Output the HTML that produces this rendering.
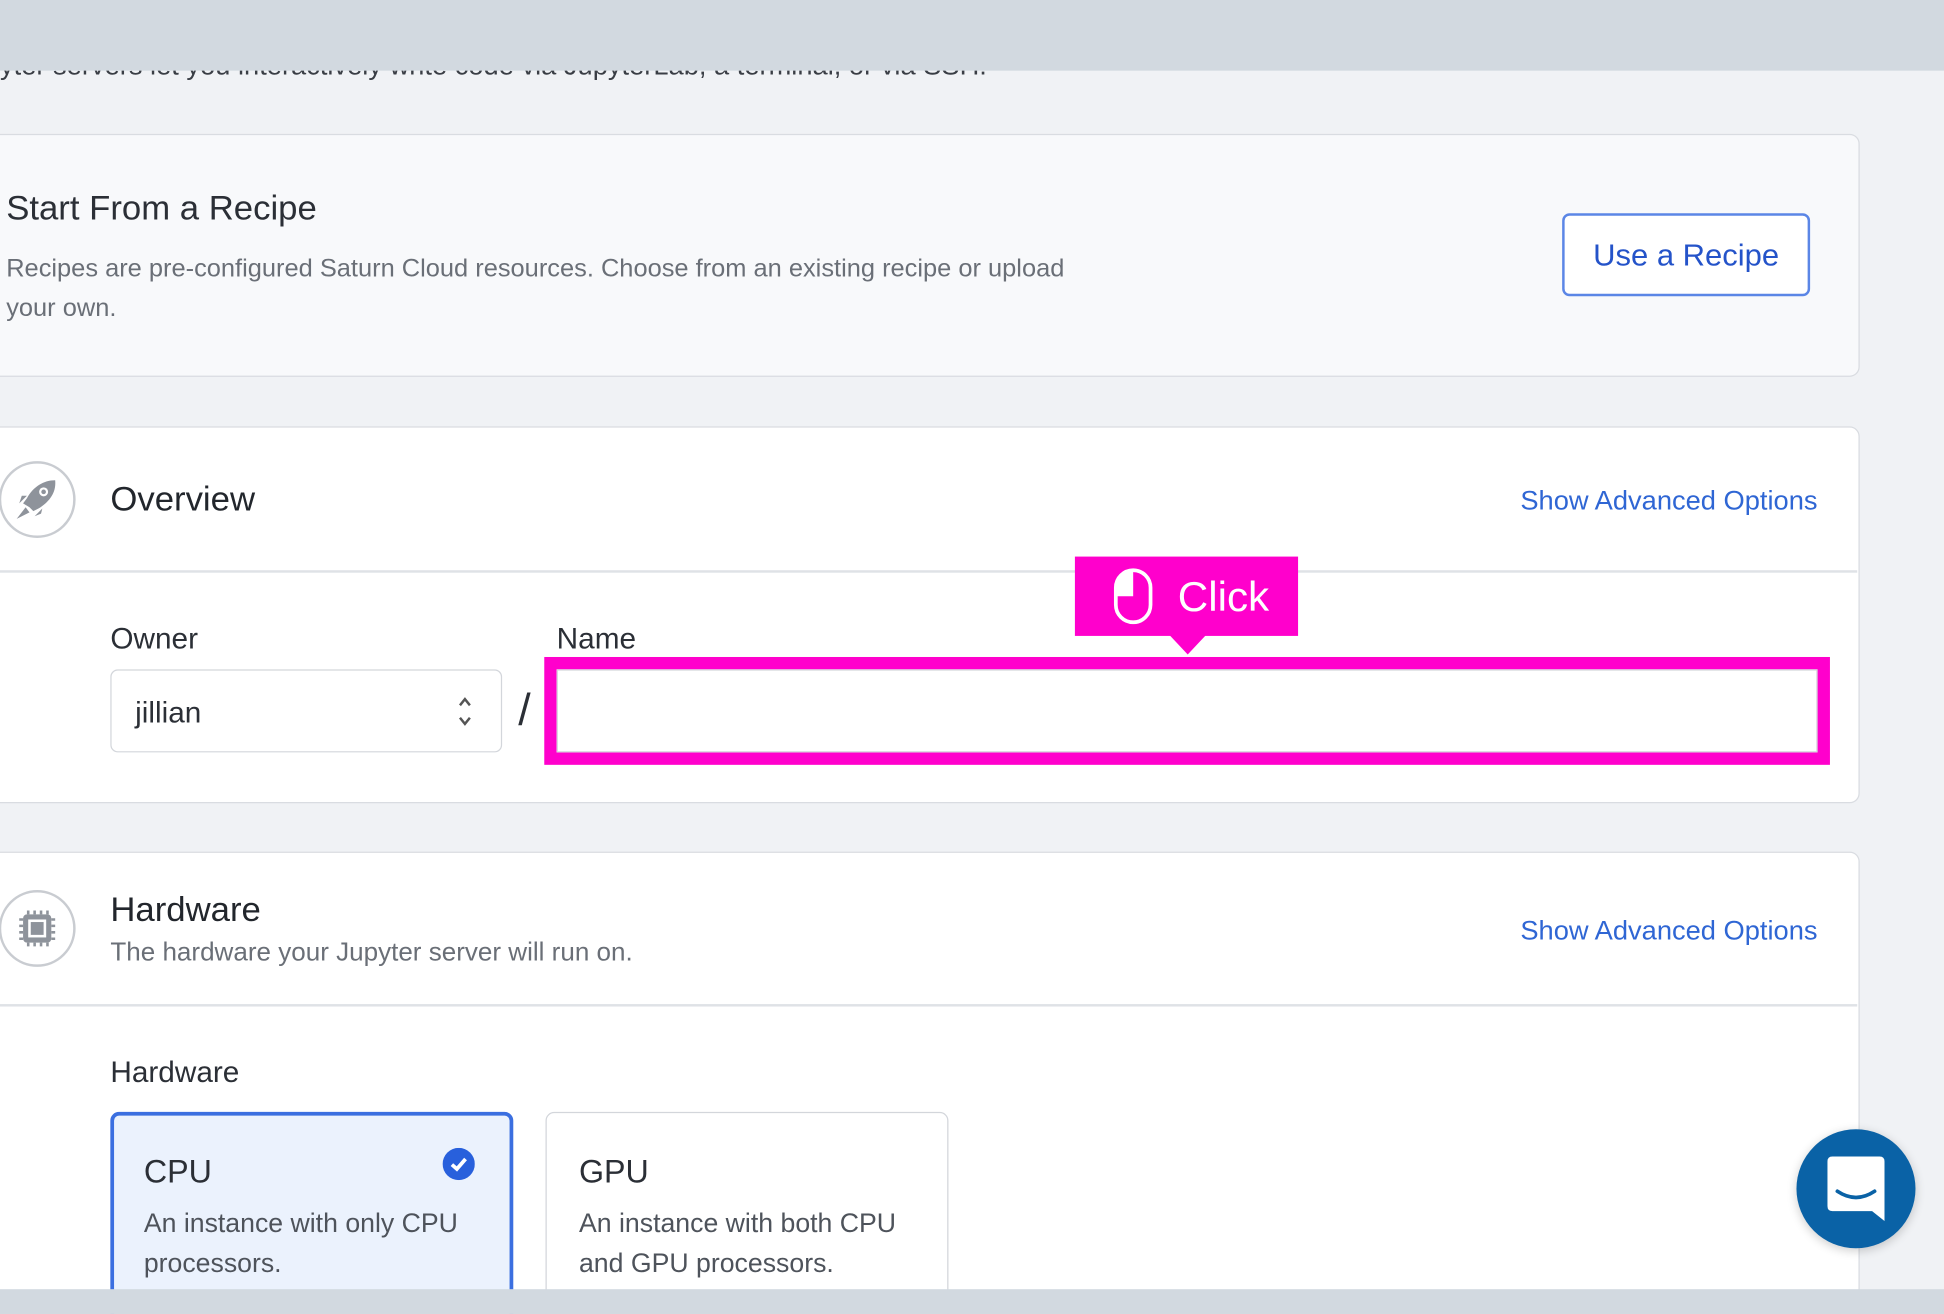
<!DOCTYPE html>
<html><head><meta charset="utf-8"><style>
html,body{margin:0;padding:0;width:1944px;height:1314px;overflow:hidden;background:#f0f2f5;}
#w{position:absolute;left:0;top:0;width:1568px;height:1060px;overflow:hidden;transform:scale(1.2398,1.2396);transform-origin:0 0;font-family:"Liberation Sans",sans-serif;color:#2b2f36;}
.a{position:absolute;}
.card{position:absolute;left:-10px;width:1510px;border:1.5px solid #d9dce1;border-radius:8px;background:#fff;box-sizing:border-box;}
.blue{color:#2f66d4;}
.ic{position:absolute;left:-1px;width:62px;height:62px;border:2.5px solid #c9ccd1;border-radius:50%;box-sizing:border-box;background:#fff;}
</style></head><body><div id="w">
<div class="a" style="left:0;top:43px;font-size:22px;color:#3a3e45;line-height:20px;">yter servers let you interactively write code via JupyterLab, a terminal, or via SSH.</div>
<div class="a" style="left:0;top:0;width:1568px;height:57px;background:#d2d9e0;"></div>

<div class="card" style="top:108px;height:196px;background:#f8f9fb;"></div>
<div class="a" style="left:5px;top:152px;font-size:28px;color:#2b2f36;">Start From a Recipe</div>
<div class="a" style="left:5px;top:201px;font-size:20.5px;line-height:32px;color:#6a6f77;width:880px;">Recipes are pre-configured Saturn Cloud resources. Choose from an existing recipe or upload your own.</div>
<div class="a" style="left:1260px;top:172px;width:200px;height:67px;border:2px solid #5b86e6;border-radius:6px;box-sizing:border-box;background:#fff;font-size:25px;line-height:65px;text-align:center;color:#2453c9;">Use a Recipe</div>

<div class="card" style="top:344px;height:304px;"></div>
<div class="a" style="left:0;top:460px;width:1498px;height:2px;background:#dfe2e6;"></div>
<div class="ic" style="top:372px;"><svg width="58" height="58" viewBox="0 0 56 56" style="position:absolute;left:0;top:0"><path d="M42 13 C33 13 25 18 20 27 L17 31 L22 34 L25 37 L29 35 C37 30 43 23 42 13 Z" fill="#8e939b"/><circle cx="33" cy="22" r="3.5" fill="#fff"/><circle cx="33" cy="22" r="1.8" fill="#8e939b"/><path d="M19 34 L12 43 L22 38 Z" fill="#8e939b"/><path d="M14 31 L20 25 L16 25 Z M26 41 L32 35 L31 39Z" fill="#8e939b"/></svg></div>
<div class="a" style="left:89px;top:387px;font-size:28px;color:#22262c;">Overview</div>
<div class="a blue" style="right:102px;top:391px;font-size:22px;">Show Advanced Options</div>
<div class="a" style="left:89px;top:502px;font-size:24px;color:#2b2f36;">Owner</div>
<div class="a" style="left:449px;top:502px;font-size:24px;color:#2b2f36;">Name</div>
<div class="a" style="left:89px;top:540px;width:316px;height:67px;border:1.5px solid #d3d6db;border-radius:6px;box-sizing:border-box;background:#fff;"></div>
<div class="a" style="left:109px;top:562px;font-size:24px;color:#2b2f36;">jillian</div>
<svg class="a" style="left:367px;top:560px" width="16" height="28" viewBox="0 0 16 28"><path d="M4 9 L8 4 L12 9 M4 19 L8 24 L12 19" fill="none" stroke="#555" stroke-width="2"/></svg>
<div class="a" style="left:418px;top:552px;font-size:36px;color:#2b2f36;">/</div>
<div class="a" style="left:439px;top:530px;width:1037px;height:87px;border:10px solid #ff00cc;box-sizing:border-box;"></div>
<div class="a" style="left:449px;top:540px;width:1017px;height:67px;border:1.5px solid #d3d6db;box-sizing:border-box;background:#fff;"></div>
<div class="a" style="left:867px;top:449px;width:180px;height:64px;background:#ff00cc;"></div>
<div class="a" style="left:943px;top:512px;width:0;height:0;border-left:15px solid transparent;border-right:15px solid transparent;border-top:16px solid #ff00cc;"></div>
<svg class="a" style="left:897px;top:457px" width="34" height="48" viewBox="0 0 34 48"><rect x="3" y="3" width="28" height="42" rx="14" fill="none" stroke="#fff" stroke-width="3"/><path d="M3 24 H17 V3 A14 14 0 0 0 3 17Z" fill="#fff"/></svg>
<div class="a" style="left:950px;top:463px;font-size:34px;color:#fff;">Click</div>

<div class="card" style="top:687px;height:420px;"></div>
<div class="a" style="left:0;top:810px;width:1498px;height:2px;background:#dfe2e6;"></div>
<div class="ic" style="top:718px;"><svg width="58" height="58" viewBox="0 0 56 56" style="position:absolute;left:0;top:0"><rect x="17" y="17" width="22" height="22" rx="3" fill="#8e939b"/><rect x="21" y="21" width="14" height="14" fill="#fff"/><rect x="23" y="23" width="10" height="10" fill="#8e939b"/><path d="M21 14v3M26 14v3M31 14v3M36 14v3M21 39v3M26 39v3M31 39v3M36 39v3M14 21h3M14 26h3M14 31h3M14 36h3M39 21h3M39 26h3M39 31h3M39 36h3" stroke="#8e939b" stroke-width="2"/></svg></div>
<div class="a" style="left:89px;top:718px;font-size:28px;color:#22262c;">Hardware</div>
<div class="a" style="left:89px;top:757px;font-size:21px;color:#6a6f77;">The hardware your Jupyter server will run on.</div>
<div class="a blue" style="right:102px;top:738px;font-size:22px;">Show Advanced Options</div>
<div class="a" style="left:89px;top:852px;font-size:24px;color:#2b2f36;">Hardware</div>
<div class="a" style="left:89px;top:897px;width:325px;height:200px;border:3px solid #3b6fe0;border-radius:7px;box-sizing:border-box;background:#ebf2fd;"></div>
<div class="a" style="left:116px;top:930px;font-size:26px;color:#2b2f36;">CPU</div>
<svg class="a" style="left:357px;top:926px" width="26" height="26" viewBox="0 0 26 26"><circle cx="13" cy="13" r="13" fill="#2860dc"/><path d="M7.5 13.5 L11.5 17 L18.5 9" fill="none" stroke="#fff" stroke-width="3"/></svg>
<div class="a" style="left:116px;top:971px;font-size:21.5px;line-height:32px;color:#4e535b;width:280px;">An instance with only CPU processors.</div>
<div class="a" style="left:440px;top:897px;width:325px;height:200px;border:1.5px solid #d3d6db;border-radius:7px;box-sizing:border-box;background:#fff;"></div>
<div class="a" style="left:467px;top:930px;font-size:26px;color:#2b2f36;">GPU</div>
<div class="a" style="left:467px;top:971px;font-size:21.5px;line-height:32px;color:#4e535b;width:285px;">An instance with both CPU and GPU processors.</div>

<div class="a" style="left:1449px;top:911px;width:96px;height:96px;border-radius:50%;background:#0a62a6;box-shadow:0 2px 8px rgba(0,0,0,.2);"></div>
<svg class="a" style="left:1472px;top:931px" width="50" height="56" viewBox="0 0 50 56"><path d="M6 2 H44 Q48 2 48 6 V54 L38 46 H6 Q2 46 2 42 V6 Q2 2 6 2Z" fill="#fff"/><path d="M10 30 Q25 40 40 30" fill="none" stroke="#0a62a6" stroke-width="3" stroke-linecap="round"/></svg>
<div class="a" style="left:0;top:1040px;width:1568px;height:20px;background:#d2d9e0;"></div>
</div></body></html>
